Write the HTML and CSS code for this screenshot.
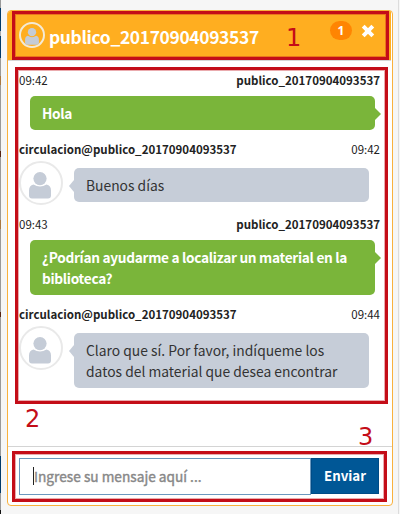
FILE: index.html
```html
<!DOCTYPE html>
<html lang="es">
<head>
<meta charset="utf-8">
<title>Chat</title>
<link rel="stylesheet" href="styles.css">
</head>
<body>
<svg width="0" height="0" class="defs"><symbol id="person" viewBox="0 0 22 27"><circle cx="11" cy="6.6" r="6.6"/><path d="M4.5 12.4Q11 16.6 17.5 12.4Q22 13.5 22 18.5V23.5Q22 26.5 19 26.5H3Q0 26.5 0 23.5V18.5Q0 13.5 4.5 12.4Z"/></symbol></svg>
<main class="chat">
  <header class="head">
    <span class="avatar small"><svg><use href="#person"/></svg></span>
    <h1><span>publico_20170904093537</span></h1>
    <span class="badge">1</span>
    <svg class="close" viewBox="0 0 14 14"><path d="M2.2 2.2L11.8 11.8M11.8 2.2L2.2 11.8"/></svg>
  </header>
  <section class="log">
    <div class="meta"><span>09:42</span><b>publico_20170904093537</b></div>
    <div class="bubble out">Hola</div>
    <div class="meta next"><b>circulacion@publico_20170904093537</b><span>09:42</span></div>
    <div class="reply"><span class="avatar"><svg><use href="#person"/></svg></span><div class="bubble in">Buenos días</div></div>
    <div class="meta next"><span>09:43</span><b>publico_20170904093537</b></div>
    <div class="bubble out">¿Podrían ayudarme a localizar un material en la<br>biblioteca?</div>
    <div class="meta next"><b>circulacion@publico_20170904093537</b><span>09:44</span></div>
    <div class="reply"><span class="avatar"><svg><use href="#person"/></svg></span><div class="bubble in">Claro que sí. Por favor, indíqueme los<br>datos del material que desea encontrar</div></div>
  </section>
  <footer class="compose">
    <div class="field"><span>Ingrese su mensaje aquí ...</span></div>
    <button>Enviar</button>
  </footer>
</main>
<div class="frame f1"></div><div class="frame f2"></div><div class="frame f3"></div>
<span class="num n1">1</span><span class="num n2">2</span><span class="num n3">3</span>
</body>
</html>
```
FILE: styles.css
```css
* { box-sizing: border-box; }
body {
  margin: 0; width: 400px; height: 514px; overflow: hidden; position: relative;
  padding: 10px 7px 8px;
  background:
    linear-gradient(#999 8px, #003a6b 8px 31px, #aaa 31px 36px, #003a6b 36px 58px, #999 58px 76px, #a87843 76px 85px, #999 85px 151px, #521 151px 157px, #999 157px 220px, #a87843 220px 229px, #999 229px 312px, #521 312px 317px, #999 317px 456px, #003a6b 456px 493px, #999 493px 510px, #111 510px) 0 0 / 1px 100% no-repeat,
    linear-gradient(#dcdcdc, #dcdcdc) 398px 0 / 1px 100% no-repeat,
    #f6f6f6;
  font-family: "Noto Sans CJK SC", "Noto Sans", sans-serif;
  color: #222;
}
.defs { position: absolute; }
.chat {
  width: 386px; height: 496px; display: flex; flex-direction: column;
  background: #fff; border: 1px solid #f9b13c; border-radius: 4px; overflow: hidden;
}
.head {
  height: 50px; flex: none; display: flex; align-items: flex-start; margin-right: 1px;
  background: #ffae20; border-bottom: 1px solid #d6d6d6; color: #fff; padding: 11px 0 0 11px;
}
.avatar {
  width: 44px; height: 44px; flex: none; border: 2px solid #e9e9e9; border-radius: 50%;
  background: #fff; padding: 9px 0 0 8px;
}
.avatar svg { display: block; width: 22px; height: 27px; fill: #c5ccd7; }
.avatar.small { width: 26px; height: 26px; background: transparent; padding: 4px 0 0 4px; border-color: #f4ead5; }
.avatar.small svg { width: 14px; height: 17px; }
h1 { margin: 1px 0 0 4px; width: 281px; flex: none; font-size: 17.4px; letter-spacing: -.34px; line-height: 28px; font-weight: 700; }
.badge {
  width: 22px; height: 19px; flex: none; margin-top: -1px; border-radius: 10px; background: #ff8502;
  font: 700 12px/19px "Noto Sans", sans-serif; text-align: center;
}
.close { width: 14px; height: 14px; flex: none; margin: 2px 0 0 9px; stroke: #fff; stroke-width: 4; fill: none; }
.log { height: 385px; flex: none; padding: 11px 12px 0 11px; }
.meta { height: 16px; display: flex; justify-content: space-between; font-size: 11.5px; line-height: 16px; }
.meta b { font-weight: 700; }
.meta.next { margin-top: 11px; }
.bubble {
  position: relative; padding: 7px 12px 6px; border-radius: 5px;
  font-size: 13.85px; line-height: 21px; white-space: nowrap;
}
.out { margin: 8px 5px 0 11px; background: #7ab53a; color: #fff; font-weight: 700; font-size: 13.7px; letter-spacing: -.31px; }
.out::after, .in::before {
  content: ""; position: absolute; top: 12px; border: 6px solid transparent;
}
.out::after { left: 100%; border-left: 6px solid #7ab53a; border-right: 0; }
.reply { display: flex; align-items: flex-start; margin-top: 4px; }
.in { width: 295px; margin: 7px 0 0 11px; background: #c6cdd8; color: #333; }
.in::before { right: 100%; border-right: 5px solid #c6cdd8; border-left: 0; }
.compose { flex: 1; display: flex; align-items: flex-start; border-top: 1px solid #d4d4d4; padding: 11px 13px 0 11px; }
.field {
  width: 292px; height: 37px; border: 1px solid #6c98be; padding: 8px 0 0 13px;
  font-size: 13.7px; line-height: 20px; color: #888; -webkit-text-stroke: .4px #888;
}
.field span { display: block; border-left: 1px solid #222; height: 18px; line-height: 19px; }
button {
  width: 68px; height: 36px; padding: 0; border: 1px solid #004b86; background: #005796; color: #fff;
  font: 700 13.3px/34px "Noto Sans CJK SC", sans-serif;
}
.frame { position: absolute; border: 3px solid #c40d18; box-shadow: inset 0 0 0 1px rgba(196,13,24,.35); }
.f1 { left: 12px; top: 11px; width: 377px; height: 49px; }
.f2 { left: 15px; top: 67px; width: 373px; height: 337px; }
.f3 { left: 12px; top: 451px; width: 375px; height: 51px; }
.num { position: absolute; color: #c40d18; font: 24px/28px "DejaVu Sans", sans-serif; }
.n1 { left: 286px; top: 24px; }
.n2 { left: 25px; top: 405px; }
.n3 { left: 358px; top: 423px; }
```
